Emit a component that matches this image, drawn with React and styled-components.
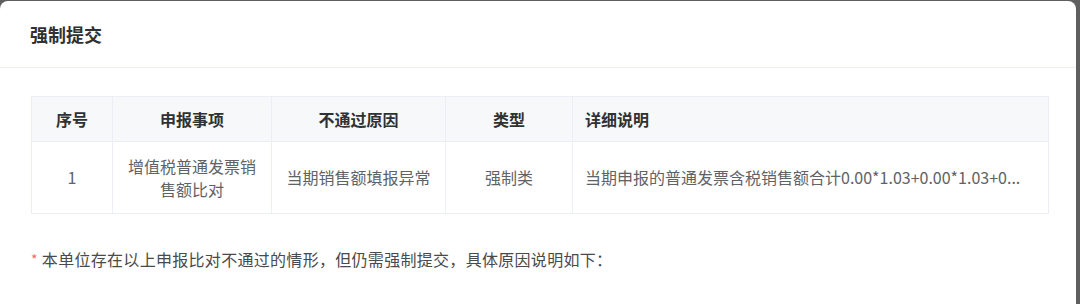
import React from 'react';
import styled, { createGlobalStyle } from 'styled-components';

const Global = createGlobalStyle`
  html, body {
    margin: 0;
    padding: 0;
    background: #5f5f5f;
    font-family: "Noto Sans CJK SC", "Noto Sans", sans-serif;
  }
`;

const Dialog = styled.div`
  margin: 1px 4px 0 0;
  height: 303px;
  background: #fff;
  border-radius: 8px 8px 0 0;
  overflow: hidden;
`;

const Header = styled.div`
  height: 67px;
  padding: 0 30px;
  display: flex;
  align-items: center;
  border-bottom: 1px solid #ebeef5;
  box-sizing: border-box;
`;

const Title = styled.div`
  font-size: 18px;
  font-weight: 700;
  color: #303133;
  margin-top: -1px;
`;

const Body = styled.div`
  padding: 28px 28px 0 31px;
`;

const Table = styled.table`
  width: 100%;
  border-collapse: collapse;
  table-layout: fixed;
  border: 1px solid #ebeef5;
`;

const Th = styled.th`
  height: 45px;
  padding: 0 12px;
  background: #f7f8fa;
  border: 1px solid #ebeef5;
  font-size: 16px;
  font-weight: 700;
  color: #303133;
  text-align: ${p => (p.$left ? 'left' : 'center')};
  box-sizing: border-box;
`;

const Td = styled.td`
  height: 72px;
  padding: 0 12px;
  border: 1px solid #ebeef5;
  font-size: 16px;
  line-height: 23px;
  color: #606266;
  text-align: ${p => (p.$left ? 'left' : 'center')};
  white-space: ${p => (p.$nowrap ? 'nowrap' : 'normal')};
  box-sizing: border-box;
`;

const Note = styled.div`
  margin-top: 33px;
  font-size: 16px;
  letter-spacing: 0.3px;
  color: #4a4a4a;
  display: flex;
  align-items: center;
  gap: 4px;
`;

const Star = styled.span`
  color: #f56c6c;
  font-size: 14px;
`;

const cols = [81, 159, 174, 127, 476];

export default function App() {
  return (
    <>
      <Global />
      <Dialog>
        <Header>
          <Title>强制提交</Title>
        </Header>
        <Body>
          <Table>
            <colgroup>
              {cols.map((w, i) => (
                <col key={i} style={{ width: w }} />
              ))}
            </colgroup>
            <thead>
              <tr>
                <Th>序号</Th>
                <Th>申报事项</Th>
                <Th>不通过原因</Th>
                <Th>类型</Th>
                <Th $left>详细说明</Th>
              </tr>
            </thead>
            <tbody>
              <tr>
                <Td>1</Td>
                <Td>增值税普通发票销售额比对</Td>
                <Td>当期销售额填报异常</Td>
                <Td>强制类</Td>
                <Td $left $nowrap>
                  当期申报的普通发票含税销售额合计0.00*1.03+0.00*1.03+0...
                </Td>
              </tr>
            </tbody>
          </Table>
          <Note>
            <Star>*</Star>
            本单位存在以上申报比对不通过的情形，但仍需强制提交，具体原因说明如下：
          </Note>
        </Body>
      </Dialog>
    </>
  );
}
